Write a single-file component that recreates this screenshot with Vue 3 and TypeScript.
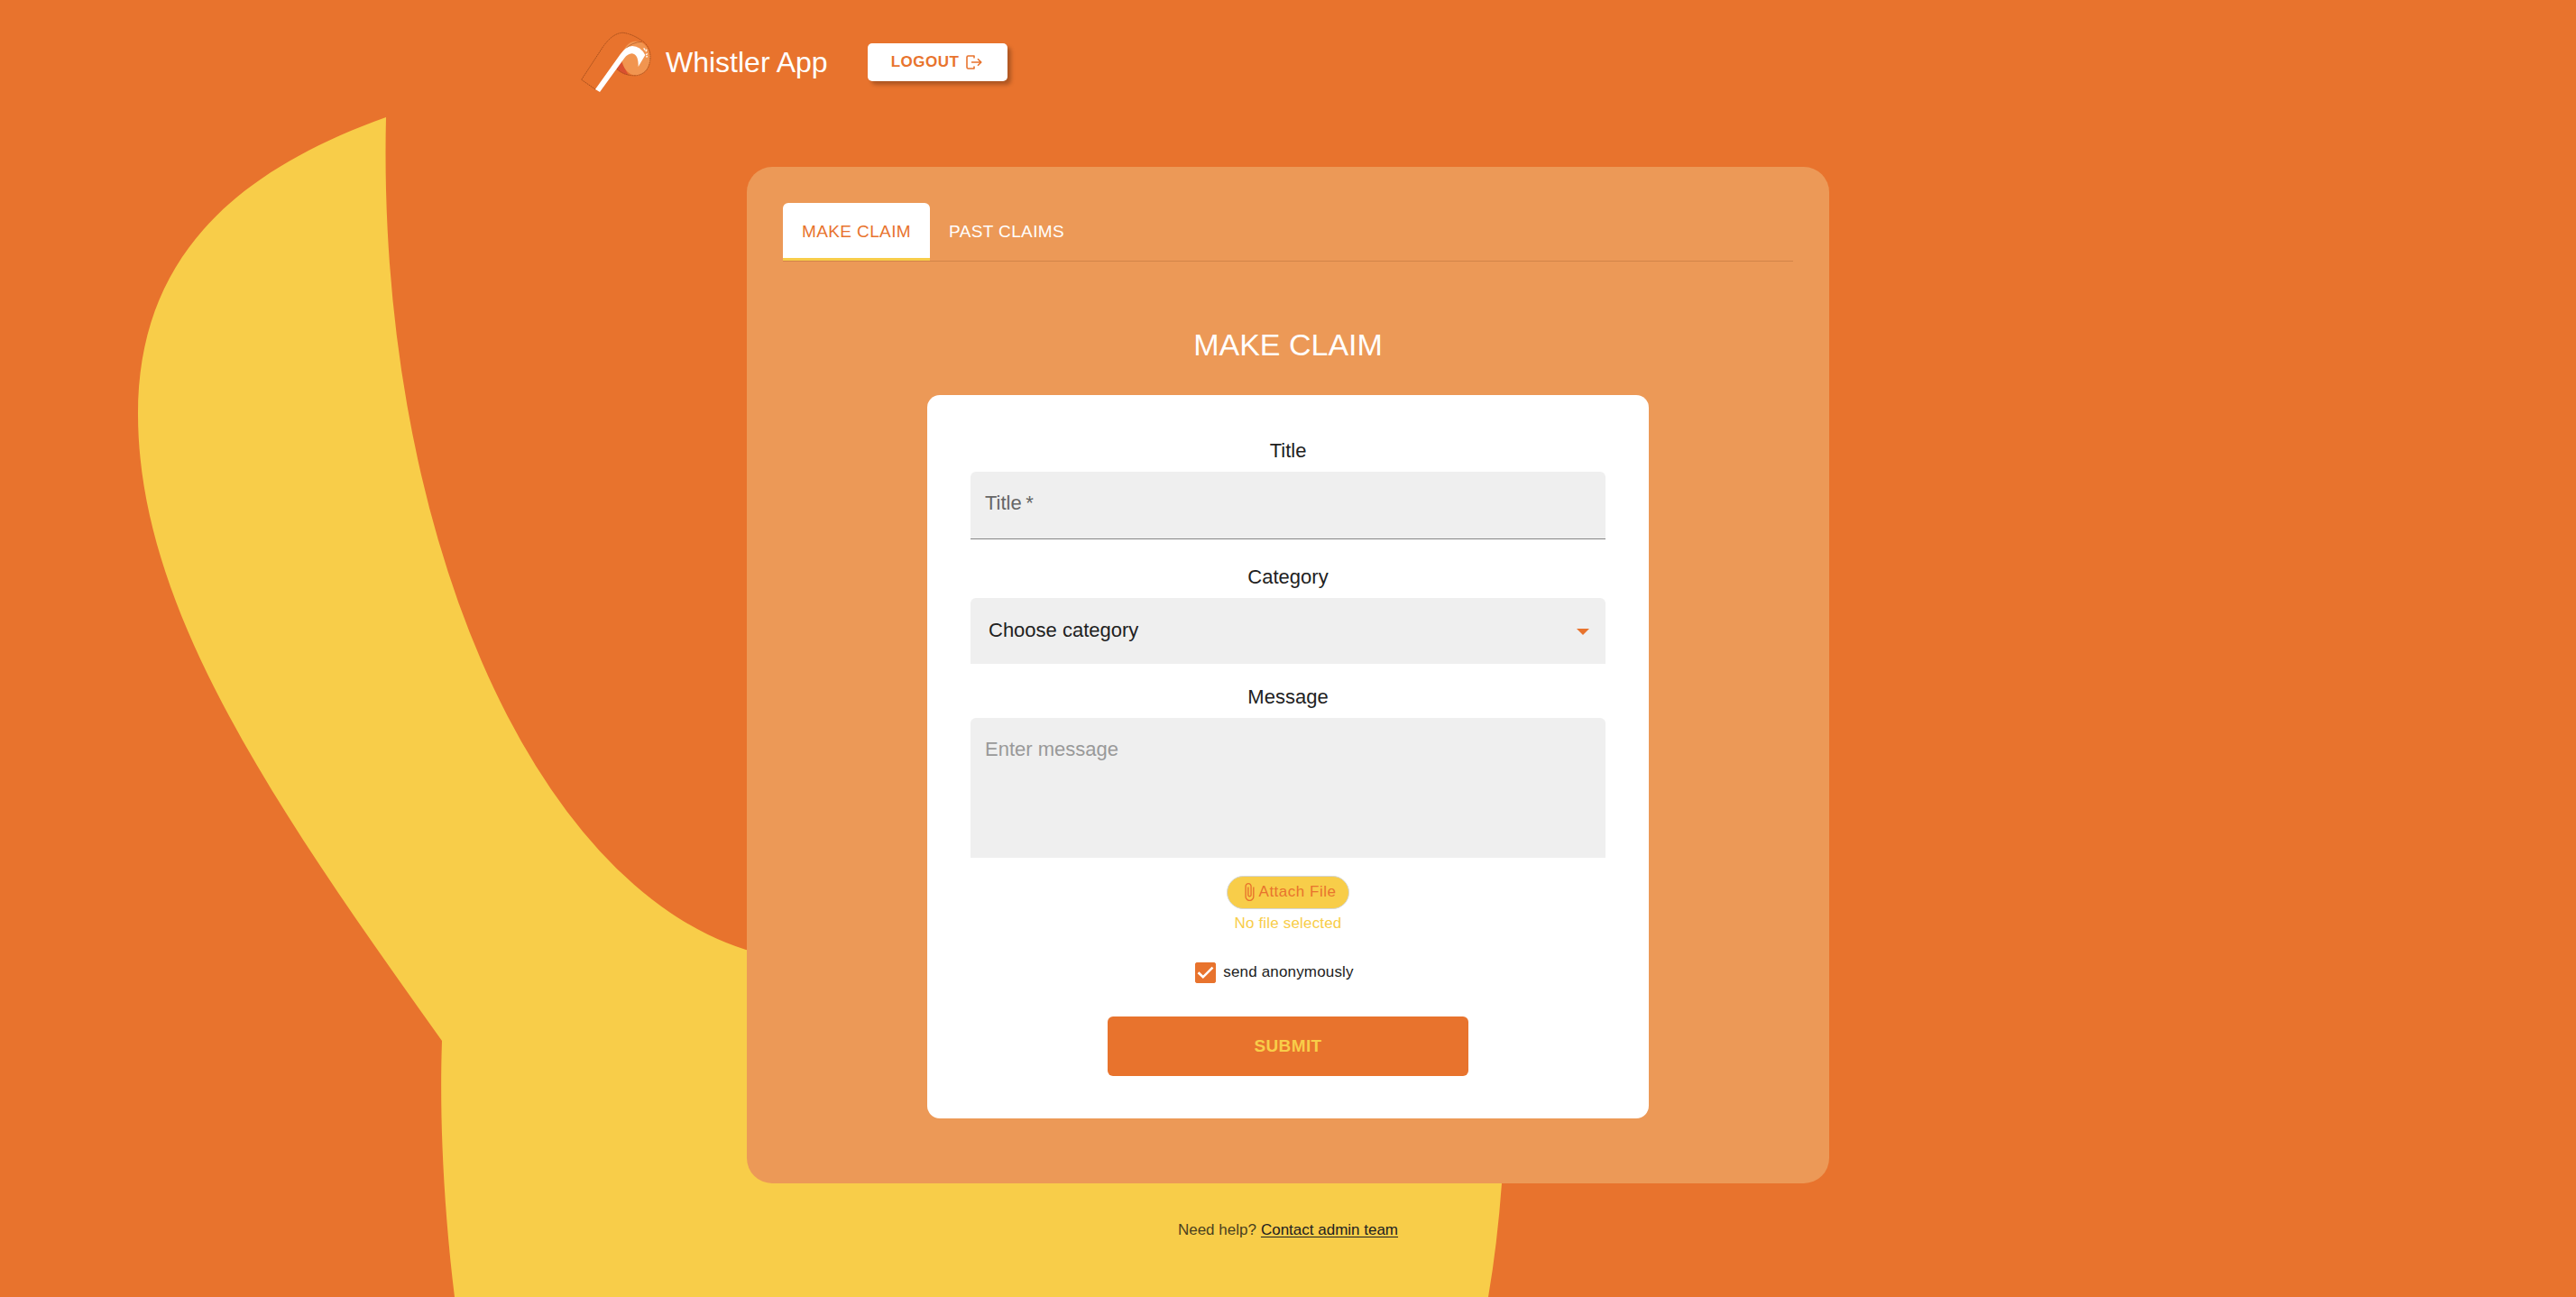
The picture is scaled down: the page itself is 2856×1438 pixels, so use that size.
<script setup lang="ts">
import { ref } from 'vue'

type TabId = 'make' | 'past'

const tabs: { id: TabId; label: string }[] = [
  { id: 'make', label: 'MAKE CLAIM' },
  { id: 'past', label: 'PAST CLAIMS' },
]
const categories: string[] = ['Bullying', 'Fraud', 'Safety', 'Other']

const activeTab = ref<TabId>('make')
const title = ref('')
const category = ref('')
const message = ref('')
const anonymous = ref(true)
</script>

<template>
  <div class="page">
    <svg class="backdrop" viewBox="0 0 2856 1438" preserveAspectRatio="xMinYMin slice" aria-hidden="true">
      <path
        d="M428 130 A478 895 0 0 0 827 1053 L1665 1200 L1665 1312 Q1660 1380 1650 1438 L504 1438 C492 1340 487 1240 490 1154 C305 895 153 675 153 459 C153 290 255 192 428 130 Z"
      />
    </svg>

    <header class="header">
      <svg class="logo" viewBox="15 27 232 204" aria-hidden="true">
        <path d="M148 126 L132 150 Q148 169 172 172 Z" fill="#d9502f" />
        <ellipse cx="198" cy="116" rx="47" ry="57" fill="#f19550" />
        <path
          d="M62 219 L16 187 L88 77 Q120 32 153 31 Q182 33 220 59 Q245 78 245 113 Q243 165 200 173 Q160 176 132 150"
          fill="none" stroke="#a9501c" stroke-width="3" stroke-dasharray="5 2"
        />
        <path d="M163 84 Q185 62 217 61" fill="none" stroke="#a9501c" stroke-width="2" />
        <path
          d="M62 219 L145 103 Q163 76 185 75 Q212 75 228 105 L205 144 Q206 102 184 100 Q170 101 158 116 L77 228 Z"
          fill="#fff"
        />
        <path d="M223 82 l5 7 M233 86 l-3 8 M235 100 l-4 5 M231 111 l5 -1" stroke="#fff" stroke-width="4" />
      </svg>
      <span class="brand">Whistler App</span>
      <button type="button" class="logout">
        LOGOUT
        <svg viewBox="0 0 18 16" aria-hidden="true">
          <path d="M9 3.5V1H2.5Q1 1 1 2.5V13.5Q1 15 2.5 15H9V12.5 M6 8H16.5 M13 4.3L16.8 8L13 11.7" />
        </svg>
      </button>
    </header>

    <main class="panel">
      <div class="tabs" role="tablist">
        <button
          v-for="tab in tabs"
          :key="tab.id"
          type="button"
          role="tab"
          class="tab"
          :class="{ active: activeTab === tab.id }"
          :aria-selected="activeTab === tab.id"
          @click="activeTab = tab.id"
        >
          {{ tab.label }}
        </button>
      </div>

      <h1 class="heading">MAKE CLAIM</h1>

      <form class="card" @submit.prevent>
        <label class="label" for="claim-title">Title</label>
        <input id="claim-title" v-model="title" class="field text" type="text" placeholder="Title&#8201;*" required />

        <label class="label" for="claim-category">Category</label>
        <div class="select-wrap">
          <select id="claim-category" v-model="category" class="field select">
            <option value="">Choose category</option>
            <option v-for="name in categories" :key="name" :value="name">{{ name }}</option>
          </select>
          <svg class="arrow" viewBox="0 0 14 7" aria-hidden="true"><path d="M0 0H14L7 7Z" /></svg>
        </div>

        <label class="label" for="claim-message">Message</label>
        <textarea id="claim-message" v-model="message" class="field area" placeholder="Enter message"></textarea>

        <button type="button" class="attach">
          <svg viewBox="0 0 24 24" aria-hidden="true">
            <path
              d="M16.5 6v11.5c0 2.21-1.79 4-4 4s-4-1.79-4-4V5c0-1.38 1.12-2.5 2.5-2.5s2.5 1.12 2.5 2.5v10.5c0 .55-.45 1-1 1s-1-.45-1-1V6H10v9.5c0 1.38 1.12 2.5 2.5 2.5s2.5-1.12 2.5-2.5V5c0-2.21-1.79-4-4-4S7 2.79 7 5v12.5c0 3.04 2.46 5.5 5.5 5.5s5.5-2.46 5.5-5.5V6h-1.5z"
            />
          </svg>
          Attach File
        </button>
        <span class="file-note">No file selected</span>

        <label class="anonymous" for="claim-anonymous">
          <span class="tick">
            <input id="claim-anonymous" v-model="anonymous" type="checkbox" />
            <svg v-if="anonymous" viewBox="0 0 23 23" aria-hidden="true"><path d="M3.5 11.2L8.8 16.3L19.5 5.6" /></svg>
          </span>
          send anonymously
        </label>

        <button type="submit" class="submit">SUBMIT</button>
      </form>
    </main>

    <footer class="help">
      <span>Need help?</span>
      <a href="#contact">Contact admin team</a>
    </footer>
  </div>
</template>

<style>
body {
  margin: 0;
  background: #e8732d;
}
</style>

<style scoped>
.page {
  --orange: #e8732d;
  --yellow: #f8cd49;
  --ink: #212121;
  position: relative;
  box-sizing: border-box;
  min-height: 100vh;
  overflow: hidden;
  background: var(--orange);
  color: var(--ink);
  font-family: "Liberation Sans", Arial, sans-serif;
}

.page * {
  box-sizing: border-box;
}

button,
input,
select,
textarea {
  margin: 0;
  border: 0;
  font: inherit;
  color: inherit;
}

button {
  cursor: pointer;
}

.backdrop {
  position: absolute;
  inset: 0;
  width: 100%;
  height: 100%;
  fill: var(--yellow);
}

.header {
  position: relative;
  display: flex;
  align-items: center;
  max-width: 1568px;
  margin: 0 auto;
  padding: 35px 0 34px;
}

.logo {
  width: 78px;
  height: 68px;
}

.brand {
  margin-left: 16px;
  color: #fff;
  font-size: 32px;
  line-height: 40px;
}

.logout {
  display: flex;
  align-items: center;
  gap: 8px;
  height: 42px;
  margin-left: 44px;
  padding: 0 28px 0 26px;
  border-radius: 5px;
  background: #fff;
  box-shadow: 4px 4px 4px rgba(0, 0, 0, 0.25);
  color: var(--orange);
  font-size: 17px;
  font-weight: 700;
  letter-spacing: 0.03em;
}

.logout svg {
  width: 18px;
  height: 16px;
  fill: none;
  stroke: currentColor;
  stroke-width: 1.6;
  stroke-linejoin: round;
}

.panel {
  position: relative;
  display: flex;
  flex-direction: column;
  align-items: center;
  max-width: 1200px;
  margin: 48px auto 0;
  padding: 40px 40px 72px;
  border-radius: 28px;
  background: #ec9957;
}

.tabs {
  display: flex;
  align-self: stretch;
  border-bottom: 1px solid #d28449;
}

.tab {
  height: 64px;
  padding: 0 21px;
  background: transparent;
  color: #fff;
  font-size: 19px;
  letter-spacing: 0.02em;
}

.tab.active {
  border-bottom: 3px solid var(--yellow);
  border-radius: 6px 6px 0 0;
  padding-top: 3px;
  background: #fff;
  color: var(--orange);
}

.heading {
  margin: 72px 0 36px;
  color: #fff;
  font-size: 34px;
  font-weight: 400;
  line-height: 40px;
}

.card {
  display: flex;
  flex-direction: column;
  align-items: center;
  width: 100%;
  max-width: 800px;
  padding: 48px 48px 47px;
  border-radius: 14px;
  background: #fff;
  font-size: 22px;
}

.label {
  margin-bottom: 9px;
  line-height: 28px;
}

.field {
  display: block;
  width: 100%;
  border-radius: 6px 6px 0 0;
  outline: 0;
  background: #efefef;
}

.field::placeholder {
  color: #999;
  opacity: 1;
}

.text {
  height: 75px;
  margin-bottom: 28px;
  padding: 0 16px 4px;
  border-bottom: 1px solid #858585;
}

.text::placeholder {
  color: #666;
}

.select-wrap {
  position: relative;
  width: 100%;
  margin-bottom: 23px;
}

.select {
  height: 73px;
  padding: 0 48px 2px 20px;
  appearance: none;
}

.arrow {
  position: absolute;
  top: 34px;
  right: 18px;
  width: 14px;
  height: 7px;
  fill: var(--orange);
  pointer-events: none;
}

.area {
  height: 155px;
  padding: 21px 16px;
  line-height: 28px;
  resize: none;
}

.attach {
  display: flex;
  align-items: center;
  height: 37px;
  margin-top: 20px;
  padding: 0 14px 1px 13px;
  border: 1px solid #d3d6d8;
  border-radius: 19px;
  background: var(--yellow);
  color: var(--orange);
  font-size: 17px;
  letter-spacing: 0.03em;
}

.attach svg {
  width: 22px;
  height: 22px;
  fill: currentColor;
}

.file-note {
  margin-top: 4px;
  color: var(--yellow);
  font-size: 17px;
  line-height: 24px;
  letter-spacing: 0.01em;
}

.anonymous {
  display: flex;
  align-items: center;
  gap: 8px;
  margin: 30px 30px 37px 0;
  font-size: 17px;
  line-height: 24px;
  letter-spacing: 0.01em;
}

.tick {
  position: relative;
  display: flex;
}

.tick input {
  width: 23px;
  height: 23px;
  border-radius: 3px;
  background: #fff;
  box-shadow: inset 0 0 0 2px var(--orange);
  appearance: none;
}

.tick input:checked {
  background: var(--orange);
}

.tick svg {
  position: absolute;
  inset: 0;
  fill: none;
  stroke: #fff;
  stroke-width: 2.6;
  pointer-events: none;
}

.submit {
  width: 400px;
  max-width: 100%;
  height: 66px;
  border-radius: 6px;
  background: var(--orange);
  color: var(--yellow);
  font-size: 19px;
  font-weight: 700;
  letter-spacing: 0.02em;
}

.help {
  position: relative;
  display: flex;
  justify-content: center;
  gap: 5px;
  margin: 40px 0;
  font-size: 17px;
  line-height: 24px;
}

.help span {
  color: #4b411f;
}

.help a {
  color: var(--ink);
  text-underline-offset: 2px;
}
</style>
